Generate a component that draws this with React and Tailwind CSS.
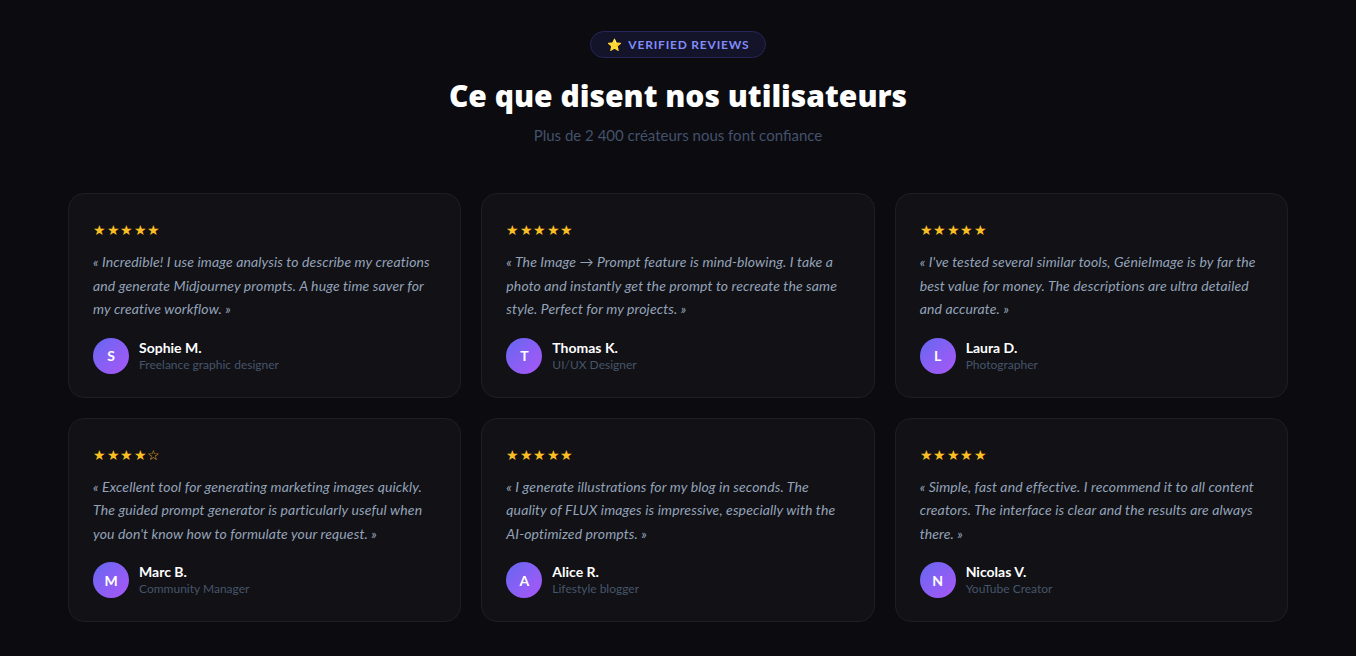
const reviews = [
  {
    stars: '★★★★★',
    text: "« Incredible! I use image analysis to describe my creations and generate Midjourney prompts. A huge time saver for my creative workflow. »",
    name: 'Sophie M.',
    role: 'Freelance graphic designer',
  },
  {
    stars: '★★★★★',
    text: '« The Image → Prompt feature is mind-blowing. I take a photo and instantly get the prompt to recreate the same style. Perfect for my projects. »',
    name: 'Thomas K.',
    role: 'UI/UX Designer',
  },
  {
    stars: '★★★★★',
    text: "« I've tested several similar tools, GénieImage is by far the best value for money. The descriptions are ultra detailed and accurate. »",
    name: 'Laura D.',
    role: 'Photographer',
  },
  {
    stars: '★★★★☆',
    text: "« Excellent tool for generating marketing images quickly. The guided prompt generator is particularly useful when you don't know how to formulate your request. »",
    name: 'Marc B.',
    role: 'Community Manager',
  },
  {
    stars: '★★★★★',
    text: '« I generate illustrations for my blog in seconds. The quality of FLUX images is impressive, especially with the AI-optimized prompts. »',
    name: 'Alice R.',
    role: 'Lifestyle blogger',
  },
  {
    stars: '★★★★★',
    text: '« Simple, fast and effective. I recommend it to all content creators. The interface is clear and the results are always there. »',
    name: 'Nicolas V.',
    role: 'YouTube Creator',
  },
];

const ReviewCard = ({ review }) => (
  <div className="rounded-2xl border border-[#1e1e26] bg-[#111116] px-6 pt-[26px] pb-[23px]">
    <div className="text-[14px] leading-5 tracking-[0.5px] text-[#fbbf24]">{review.stars}</div>
    <p className="mt-[10px] text-[14px] italic leading-[23.5px] tracking-[0.12px] text-[#94a3b8]">{review.text}</p>
    <div className="mt-[17px] flex items-center gap-[10px]">
      <div className="flex h-9 w-9 shrink-0 items-center justify-center rounded-full bg-gradient-to-br from-[#6366f1] to-[#a855f7] text-[14px] font-bold text-white">
        {review.name[0]}
      </div>
      <div className="flex flex-col">
        <span className="text-[14px] font-bold leading-[18px] text-white">{review.name}</span>
        <span className="text-[12px] leading-4 text-[#475569]">{review.role}</span>
      </div>
    </div>
  </div>
);

export default function App() {
  return (
    <div className="min-h-[656px] bg-[#0b0b10] pt-[31px] pb-9" style={{ fontFamily: 'Lato, "Noto Sans", sans-serif' }}>
      <div className="flex flex-col items-center">
        <div className="flex h-[27px] items-center gap-[6px] rounded-full border border-[#27265a] bg-[#13132a] px-4 text-[12px] font-bold tracking-[0.8px] text-[#818cf8]">
          <span className="text-[12px]">⭐</span>
          <span>VERIFIED REVIEWS</span>
        </div>
        <h2
          className="mt-[19px] text-[30px] font-extrabold leading-[38px] text-white"
          style={{ fontFamily: '"Open Sans", Lato, sans-serif' }}
        >
          Ce que disent nos utilisateurs
        </h2>
        <p className="mt-[10px] text-[15px] leading-5 text-[#44526b]">Plus de 2 400 créateurs nous font confiance</p>
      </div>
      <div className="mx-auto mt-[48px] grid w-[1220px] grid-cols-3 gap-5">
        {reviews.map(r => (
          <ReviewCard key={r.name} review={r} />
        ))}
      </div>
    </div>
  );
}
